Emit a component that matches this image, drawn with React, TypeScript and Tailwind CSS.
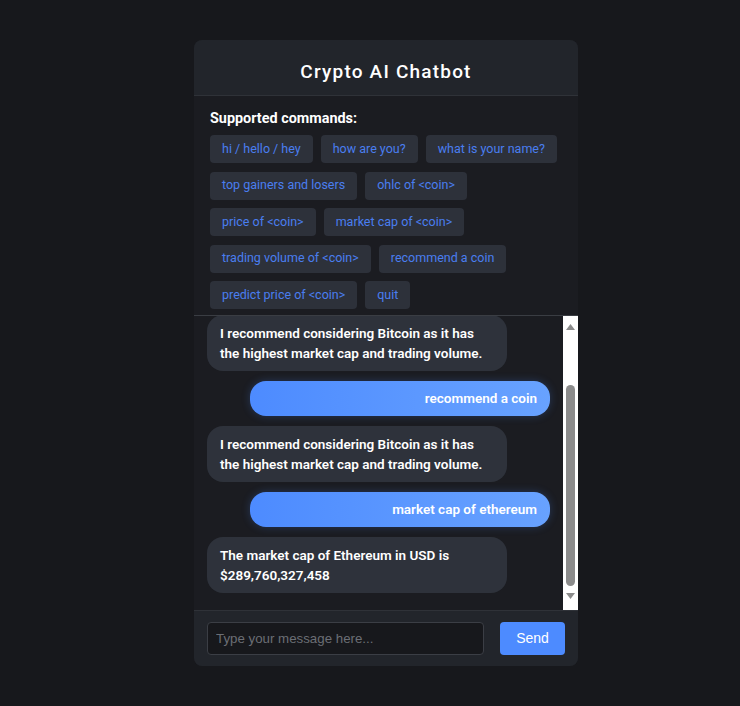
import { useLayoutEffect, useRef } from "react";

const comandos = [
  "hi / hello / hey",
  "how are you?",
  "what is your name?",
  "top gainers and losers",
  "ohlc of <coin>",
  "price of <coin>",
  "market cap of <coin>",
  "trading volume of <coin>",
  "recommend a coin",
  "predict price of <coin>",
  "quit",
];

type Msg = { de: "bot" | "user"; texto: string };

const mensagens: Msg[] = [
  { de: "user", texto: "hi" },
  { de: "bot", texto: "Hello! I am a crypto chatbot. How can I help you today?" },
  { de: "bot", texto: "I recommend considering Bitcoin as it has the highest market cap and trading volume." },
  { de: "user", texto: "recommend a coin" },
  { de: "bot", texto: "I recommend considering Bitcoin as it has the highest market cap and trading volume." },
  { de: "user", texto: "market cap of ethereum" },
  { de: "bot", texto: "The market cap of Ethereum in USD is $289,760,327,458" },
];

function Bolha({ msg }: { msg: Msg }) {
  if (msg.de === "user") {
    return (
      <div className="flex justify-end">
        <div className="w-[300px] rounded-2xl bg-gradient-to-r from-[#4d8bff] to-[#68a2ff] px-[13px] py-2 text-right text-[13.5px] font-semibold leading-[19px] text-white shadow-[0_0_8px_rgba(77,139,255,0.25)]">
          {msg.texto}
        </div>
      </div>
    );
  }
  return (
    <div className="flex justify-start">
      <div className="w-[300px] rounded-2xl bg-[#2e323b] px-[13px] py-2 text-[13.5px] font-semibold leading-5 text-white">
        {msg.texto}
      </div>
    </div>
  );
}

/** Barra de rolagem desenhada (o navegador headless esconde a nativa). */
function BarraRolagem() {
  return (
    <div className="flex w-[15px] shrink-0 flex-col items-center bg-white pt-2">
      <svg width="9" height="6" viewBox="0 0 9 6" aria-hidden>
        <path d="M4.5 0L9 6H0z" fill="#8b8b8b" />
      </svg>
      <div className="mt-[55px] h-[201px] w-[9px] rounded-full bg-[#8b8b8b]" />
      <svg width="9" height="6" viewBox="0 0 9 6" className="mt-[7px]" aria-hidden>
        <path d="M0 0h9L4.5 6z" fill="#8b8b8b" />
      </svg>
    </div>
  );
}

export default function App() {
  const chatRef = useRef<HTMLDivElement>(null);

  useLayoutEffect(() => {
    if (chatRef.current) chatRef.current.scrollTop = chatRef.current.scrollHeight;
  }, []);

  return (
    <div
      className="flex min-h-screen items-center justify-center bg-[#17181c] pl-8"
      style={{ fontFamily: "Roboto, 'Liberation Sans', sans-serif" }}
    >
      <div className="flex h-[626px] w-[384px] flex-col overflow-hidden rounded-lg bg-[#1b1c21]">
        <header className="flex h-14 shrink-0 items-center justify-center border-b border-[#2f3238] bg-[#22252b] pt-[9px]">
          <h1 className="text-[19px] font-medium tracking-[1.2px] text-white">Crypto AI Chatbot</h1>
        </header>

        <section className="shrink-0 border-b border-[#3a3d43] px-4 pb-[6px] pt-[15px]">
          <h2 className="mb-[8px] text-[14.4px] font-bold leading-4 text-white">Supported commands:</h2>
          <div className="flex flex-wrap gap-x-2 gap-y-[8.5px]">
            {comandos.map((c) => (
              <span
                key={c}
                className="flex h-[28px] items-center rounded bg-[#2d313a] px-3 text-[12.5px] text-[#4a7ef0]"
              >
                {c}
              </span>
            ))}
          </div>
        </section>

        <div className="flex min-h-0 flex-1">
          <div
            ref={chatRef}
            className="flex min-w-0 flex-1 flex-col gap-[10px] overflow-hidden pb-[17px] pl-[13px] pr-[13px] pt-4"
          >
            {mensagens.map((m, i) => (
              <Bolha key={i} msg={m} />
            ))}
          </div>
          <BarraRolagem />
        </div>

        <footer
          className="flex h-14 shrink-0 items-center gap-4 border-t border-[#2f3238] bg-[#22252b] px-[13px]"
          style={{ fontFamily: "'Liberation Sans', Arial, sans-serif" }}
        >
          <input
            type="text"
            placeholder="Type your message here..."
            className="h-[33px] flex-1 rounded border border-[#3b3e45] bg-[#17181c] px-2 text-[13.3px] text-white placeholder:text-[#6b6e75] focus:outline-none"
          />
          <button className="h-[33px] w-[65px] rounded bg-[#4d8bff] text-[14px] text-white">Send</button>
        </footer>
      </div>
    </div>
  );
}
